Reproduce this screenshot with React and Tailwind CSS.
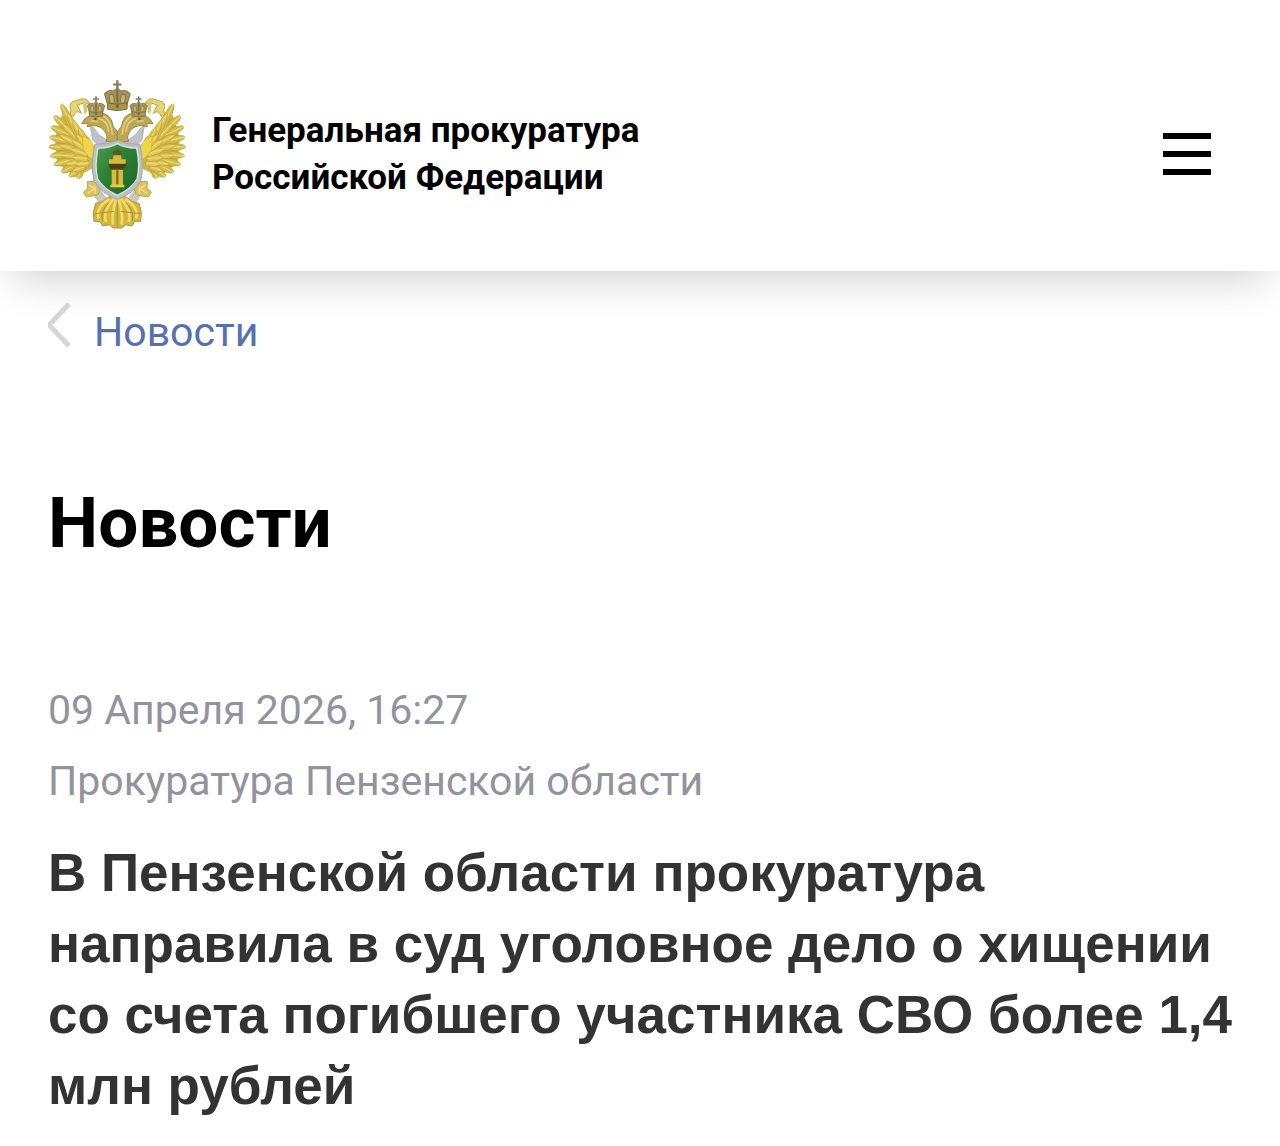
const articleTitle =
  'В Пензенской области прокуратура направила в суд уголовное дело о хищении со счета погибшего участника СВО более 1,4 млн рублей';

// Feathers of one wing: [base x, base y, tip x, tip y]
const outerFeathers = [
  [122, 295, 114, 321], [128, 285, 88, 316], [120, 275, 64, 302], [115, 260, 42, 280],
  [110, 245, 31, 254], [108, 230, 27, 226], [108, 215, 29, 197], [108, 200, 33, 166],
  [105, 190, 42, 134], [108, 190, 64, 98],
];
const innerFeathers = [
  [135, 285, 100, 298], [130, 270, 80, 278], [128, 255, 64, 252], [126, 238, 60, 222],
  [124, 225, 62, 192], [122, 212, 68, 158], [120, 205, 84, 128], [132, 215, 100, 150],
  [140, 225, 118, 172], [148, 235, 134, 192],
];
const shortFeathers = [
  [146, 275, 108, 278], [142, 262, 98, 258], [142, 248, 94, 234], [144, 238, 98, 208], [150, 235, 112, 192],
];

const feather = ([x1, y1, x2, y2], w) => {
  const dx = x2 - x1;
  const dy = y2 - y1;
  const len = Math.hypot(dx, dy);
  const nx = (-dy / len) * w;
  const ny = (dx / len) * w;
  const mx = x1 + dx * 0.7;
  const my = y1 + dy * 0.7;
  return `M${x1 + nx} ${y1 + ny} L${mx + nx} ${my + ny} Q${x2 + nx * 0.6} ${y2 + ny * 0.6} ${x2} ${y2} Q${x2 - nx * 0.6} ${y2 - ny * 0.6} ${mx - nx} ${my - ny} L${x1 - nx} ${y1 - ny}Z`;
};

const Feathers = ({ list, fill, width }) =>
  list.map((f, i) => (
    <g key={i}>
      <path d={feather(f, width)} fill={fill} stroke="#b59d3d" strokeWidth="2" />
      <path d={`M${f[0]} ${f[1]} L${f[2]} ${f[3]}`} stroke="#ecd96f" strokeWidth="4" fill="none" />
    </g>
  ));

const Crown = ({ x, y, scale }) => (
  <g transform={`translate(${x} ${y}) scale(${scale})`}>
    <path d="M-3 -43h6v8h8v5h-8v10h-6v-10h-8v-5h8Z" fill="#847d58" />
    <path d="M-24 23 L-33 -8 Q-22 -21 -9 -15 Q0 -27 9 -15 Q22 -21 33 -8 L24 23Z" fill="#a69357" stroke="#857a48" strokeWidth="3" />
    <path d="M-19 13 Q-24 -5 -15 -8 Q-7 -5 -8 13 M8 13 Q7 -5 15 -8 Q24 -5 19 13" fill="#c9b76c" stroke="#85784a" strokeWidth="3" />
    <path d="M0 -17V14" stroke="#756c46" strokeWidth="5" />
    <path d="M-25 15 Q0 22 25 15 L25 31 Q0 38 -25 31Z" fill="#ad954b" stroke="#796e43" strokeWidth="3" />
    <circle cy="24" r="4" fill="#6b613d" />
  </g>
);

const EagleHalf = () => (
  <g>
    {/* Ribbon */}
    <path d="M90 132 L93 116 Q82 92 108 88 Q138 74 149 96 Q130 92 112 101 L124 126 Q107 113 101 135Z" fill="#e6d672" stroke="#b8a44c" strokeWidth="3" />
    <path d="M140 92 L141 122 L133 128 L129 98Z" fill="#d9c764" />
    {/* Wing */}
    <path d="M66 130 L108 175 L148 200 L165 250 L160 290 L118 312 L80 300 L50 270 L45 200Z" fill="#cdb54a" />
    <Feathers list={outerFeathers} fill="#d3bb49" width={10} />
    <Feathers list={innerFeathers} fill="#d9c04b" width={9} />
    <Feathers list={shortFeathers} fill="#dfc74f" width={9} />
    <path d="M127 194 L148 204 L162 224 L164 268 L145 256 L130 236Z" fill="#efd548" stroke="#cdae37" strokeWidth="2" />
    {/* Sceptre and blade */}
    <path d="M150 161 L162 170 L177 190 L208 211 L177 222 L158 207Z" fill="#bfc1c8" stroke="#a4a7ad" strokeWidth="2" />
    {/* Head and neck */}
    <path d="M125 157 Q136 134 158 132 Q181 118 202 132 Q216 141 219 164 L232 182 L232 214 L198 210 Q206 193 192 177 Q180 162 158 163 L141 166 L145 157Z" fill="#bda751" stroke="#9a8849" strokeWidth="3" />
    <path d="M174 141 Q205 147 206 182 M190 134 Q216 151 217 190 M153 148 L174 151" fill="none" stroke="#e0cd7a" strokeWidth="5" />
    <circle cx="166" cy="143" r="4" fill="#635a35" />
    {/* Claw */}
    <path d="M168 340 L199 382 L180 398 L164 374Z" fill="#c9c8c4" stroke="#aaa897" strokeWidth="2" />
    <path d="M142 330 L165 331 L182 350 L175 370 L157 374 L139 377 L130 363 L143 351Z" fill="#d9c45c" stroke="#bca84d" strokeWidth="3" />
    <path d="M147 340 L164 352 L143 366 M165 343 L166 368" fill="none" stroke="#efdd88" strokeWidth="4" />
    {/* Tail */}
    <path d="M232 368 L207 376 L187 391 L167 396 L160 423 L162 450 L180 450 L188 464 L208 460 L219 470 L232 470Z" fill="#d3b63f" stroke="#ae9436" strokeWidth="3" />
    <path d="M208 383 Q166 409 176 442 M221 382 Q187 423 198 452 M230 380 Q214 424 219 460" fill="none" stroke="#f0dc62" strokeWidth="8" />
    <path d="M205 396 Q181 418 187 448 M163 427 L222 420" fill="none" stroke="#a99339" strokeWidth="3" />
  </g>
);

const Emblem = () => (
  <svg viewBox="24 20 414 456" className="h-[152px] w-[138px] shrink-0" role="img" aria-label="Герб">
    <defs>
      <linearGradient id="shield" x1="0" y1="0" x2="1" y2="1">
        <stop offset="0" stopColor="#4f9b4c" />
        <stop offset="0.45" stopColor="#2b7f33" />
        <stop offset="1" stopColor="#1b6627" />
      </linearGradient>
    </defs>
    <EagleHalf />
    <g transform="translate(464 0) scale(-1 1)">
      <EagleHalf />
    </g>
    <Crown x={232} y={77} scale={1.16} />
    <Crown x={168} y={109} scale={0.8} />
    <Crown x={296} y={109} scale={0.8} />
    <path d="M232 207 Q200 221 164 219 Q151 283 162 329 Q182 365 232 385 Q282 365 302 329 Q313 283 300 219 Q264 221 232 207Z" fill="#bcc2c4" stroke="#9fa6a7" strokeWidth="3" />
    <path d="M232 217 Q205 232 174 230 Q163 284 173 323 Q191 353 232 372 Q273 353 291 323 Q301 284 290 230 Q259 232 232 217Z" fill="url(#shield)" stroke="#dfe5e0" strokeWidth="4" />
    {/* Pillar of law */}
    <path d="M219 238h8l5-5 5 5h8v12h-26Z" fill="#65521b" />
    <path d="M221 252h22l2 12h12v13h-50v-13h12Z" fill="#d7b93a" />
    <path d="M205 278h54l-5 14h-44Z" fill="#4c4215" />
    <path d="M215 296h34v47h-34Z" fill="#d8bd3d" />
    <path d="M232 297v42" stroke="#806820" strokeWidth="7" />
    <path d="M211 340h42v8h-42Z" fill="#e4ca4b" />
  </svg>
);

const Header = () => (
  <header className="relative flex items-center justify-between bg-white pt-[78px] pr-[69px] pb-[41px] pl-12 shadow-[0_20px_40px_-12px_rgba(0,0,0,0.18)]">
    <a href="#home" className="flex items-center gap-[26px] text-black">
      <Emblem />
      <span className="text-[35px] leading-[47px] font-bold">
        Генеральная прокуратура
        <br />
        Российской Федерации
      </span>
    </a>
    <button type="button" aria-label="Меню" className="flex shrink-0 flex-col gap-3">
      <span className="h-1.5 w-12 bg-black" />
      <span className="h-1.5 w-12 bg-black" />
      <span className="h-1.5 w-12 bg-black" />
    </button>
  </header>
);

export default function App() {
  return (
    <div className="min-h-screen overflow-hidden bg-white font-[Roboto,sans-serif]">
      <Header />
      <main className="px-12 pt-[26px]">
        <nav className="relative">
          <a href="#news" className="flex items-start gap-[22px] text-[41px] leading-[71px] text-[#5870b0]">
            <svg viewBox="1 0 24 48" className="mt-1 h-12 w-6 shrink-0" fill="none" stroke="#d5d5d5" strokeWidth="5">
              <path d="M22 3 L2 24 L22 45" strokeLinejoin="round" />
            </svg>
            Новости
          </a>
        </nav>

        <h1 className="mt-[113px] text-[71px] leading-[84px] font-bold text-black">Новости</h1>

        <article className="mt-[110px]">
          <div className="text-[41px] leading-[71px] text-[#92939c]">
            <p>09 Апреля 2026, 16:27</p>
            <p>Прокуратура Пензенской области</p>
          </div>
          <h2 className="mt-5 -mr-2 font-['Liberation_Sans',sans-serif] text-[53px] leading-[71px] font-bold text-[#333333]">
            {articleTitle}
          </h2>
        </article>
      </main>
    </div>
  );
}
